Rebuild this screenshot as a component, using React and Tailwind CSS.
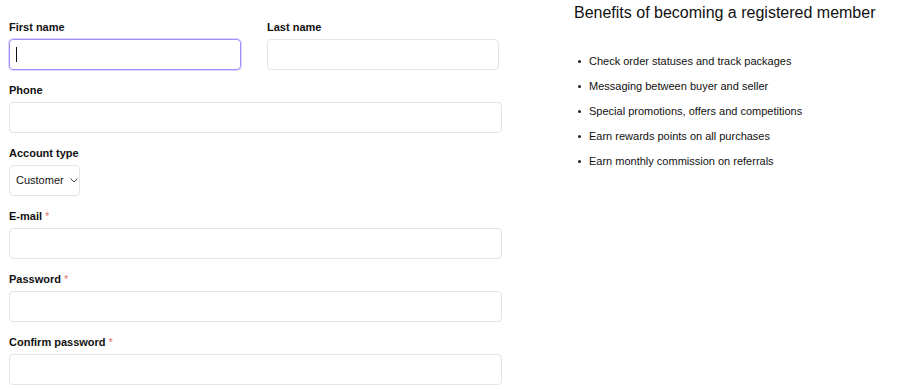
import { useState } from 'react';

const benefits = [
  'Check order statuses and track packages',
  'Messaging between buyer and seller',
  'Special promotions, offers and competitions',
  'Earn rewards points on all purchases',
  'Earn monthly commission on referrals',
];

function Label({ children, required }) {
  return (
    <label className="mb-[5px] block text-[11px] font-bold leading-[14px] text-[#111]">
      {children}
      {required && <span className="ml-[3px] font-normal text-[#e0766b]">*</span>}
    </label>
  );
}

function TextInput({ focused, type = 'text' }) {
  if (focused) {
    return (
      <div className="relative">
        <input
          type={type}
          className="block h-[31px] w-full rounded-[4px] border border-[#a78bfa] px-[7px] text-[12px] shadow-[0_0_0_1px_#ddd6fe] outline-none"
        />
        <span className="absolute left-[7px] top-[8px] h-[15px] w-px bg-[#111]" />
      </div>
    );
  }
  return (
    <input
      type={type}
      className="block h-[31px] w-full rounded-[4px] border border-[#e4e4e7] px-[7px] text-[12px] outline-none"
    />
  );
}

export default function App() {
  const [accountType, setAccountType] = useState('Customer');

  return (
    <div className="flex h-[390px] w-[900px] bg-white font-['Liberation_Sans',Arial,sans-serif] text-[#111]">
      <form className="w-[493px] ml-[9px] flex flex-col gap-[13px] pt-[20px]">
        <div className="flex gap-[26px]">
          <div className="w-[232px]">
            <Label>First name</Label>
            <TextInput focused />
          </div>
          <div className="w-[232px]">
            <Label>Last name</Label>
            <TextInput />
          </div>
        </div>

        <div>
          <Label>Phone</Label>
          <TextInput />
        </div>

        <div>
          <Label>Account type</Label>
          <button
            type="button"
            onClick={() => setAccountType(accountType === 'Customer' ? 'Seller' : 'Customer')}
            className="flex h-[31px] w-[71px] items-center gap-[6px] rounded-[4px] border border-[#e4e4e7] pl-[6px] text-[11px]"
          >
            <span>{accountType}</span>
            <svg width="8" height="5" viewBox="0 0 8 5" fill="none">
              <path d="M0.5 0.5L4 4L7.5 0.5" stroke="#444" strokeWidth="1" />
            </svg>
          </button>
        </div>

        <div>
          <Label required>E-mail</Label>
          <TextInput type="email" />
        </div>

        <div>
          <Label required>Password</Label>
          <TextInput type="password" />
        </div>

        <div>
          <Label required>Confirm password</Label>
          <TextInput type="password" />
        </div>
      </form>

      <div className="ml-[72px] pt-[3px]">
        <h2 className="text-[16px] leading-[20px] text-[#111]">Benefits of becoming a registered member</h2>
        <ul className="mt-[26px]">
          {benefits.map((item) => (
            <li key={item} className="flex h-[25px] items-center text-[11px]">
              <span className="ml-[4px] mr-[8px] h-[3px] w-[3px] rounded-full bg-[#222]" />
              {item}
            </li>
          ))}
        </ul>
      </div>
    </div>
  );
}
